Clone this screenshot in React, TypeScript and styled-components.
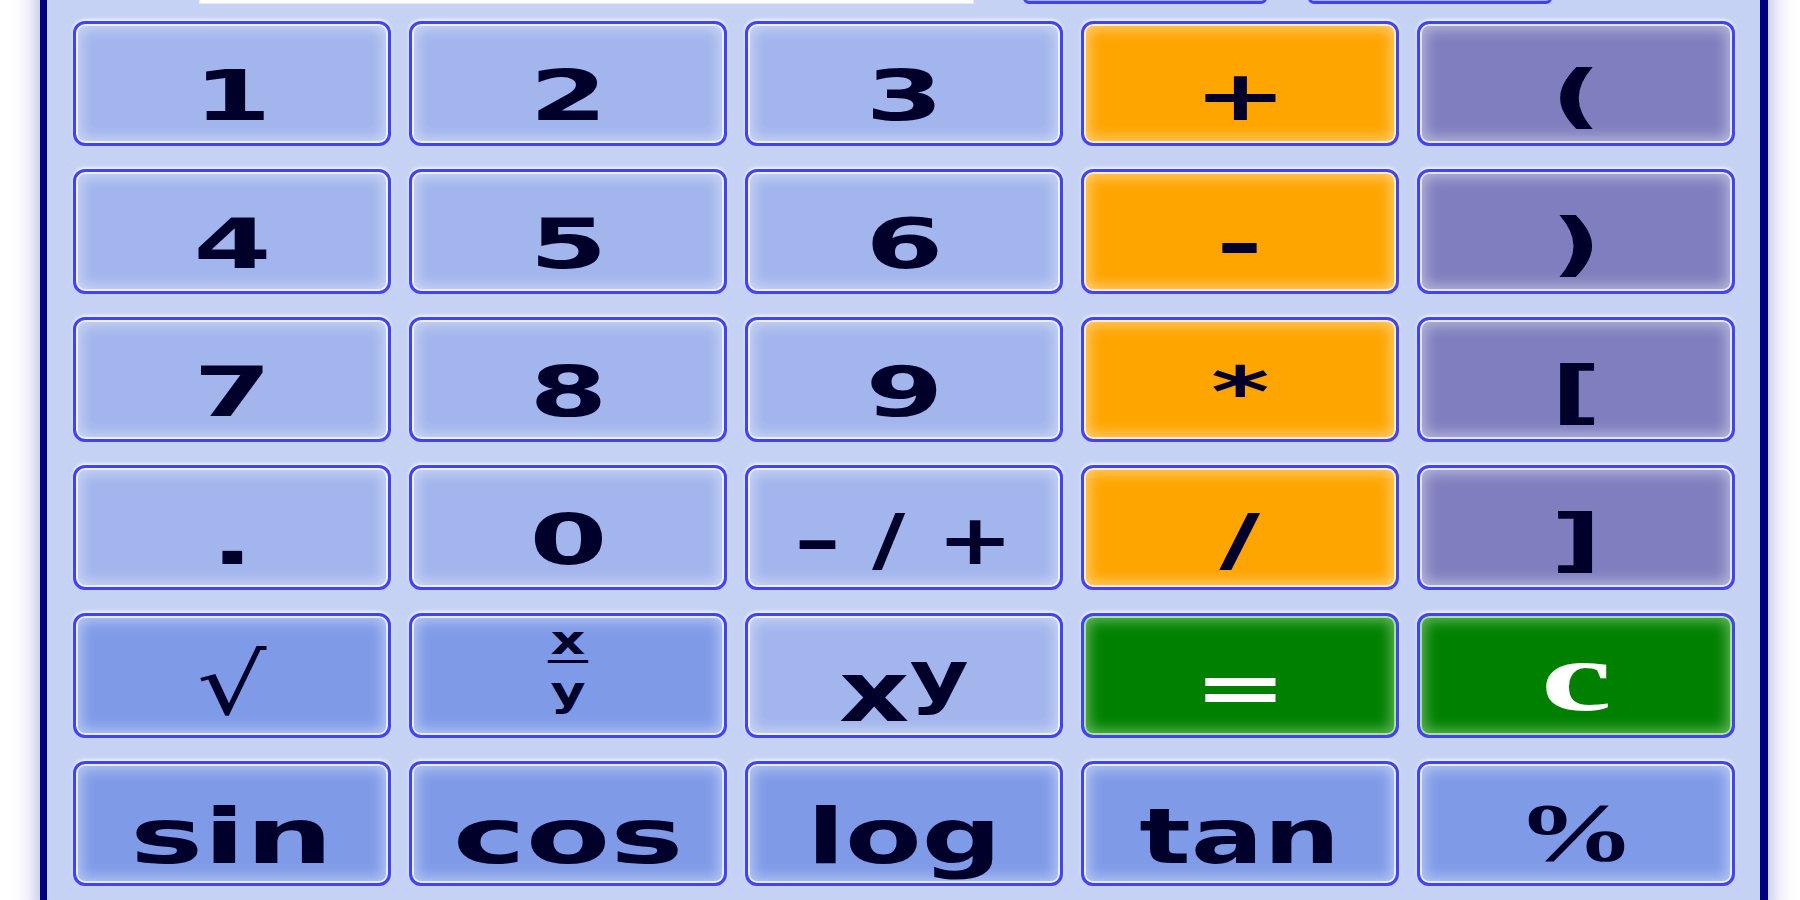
import React from "react";
import styled, { createGlobalStyle, css } from "styled-components";

type Tone = "num" | "fn" | "op" | "paren" | "go";

interface KeyDef {
	label: React.ReactNode;
	tone: Tone;
	size?: number;
	drop?: number;
	serif?: boolean;
	thin?: boolean;
	stretch?: number;
}

const GlobalStyle = createGlobalStyle`
	html, body {
		margin: 0;
		padding: 0;
		background: #ffffff;
		overflow: hidden;
	}
`;

const tones: Record<Tone, string> = {
	num: "#a2b5ec",
	fn: "#7f9be8",
	op: "#ffa500",
	paren: "#7f7fbf",
	go: "#008000",
};

const Page = styled.div`
	width: 1800px;
	height: 900px;
	overflow: hidden;
	box-sizing: border-box;
	padding: 0 32px 0 40px;
	background: #ffffff;
`;

const Panel = styled.div`
	height: 960px;
	margin-top: -40px;
	box-sizing: border-box;
	padding: 0 25px 0 26px;
	background: #c6d2f4;
	border-left: 7px solid #000080;
	border-right: 8px solid #000080;
	box-shadow: 0 0 22px 2px rgba(70, 80, 190, 0.45);
	display: flex;
	flex-direction: column;
	gap: 17px;
`;

const DisplayRow = styled.div`
	display: flex;
	align-items: stretch;
	height: 44px;
	padding-left: 126px;
`;

const Screen = styled.input`
	width: 775px;
	box-sizing: border-box;
	border: 1px solid #e6ebfb;
	background: #ffffff;
	outline: none;
`;

const MemButton = styled.button<{ $first?: boolean }>`
	width: 244px;
	margin-left: ${(p) => (p.$first ? "49px" : "41px")};
	border: 3px solid #4141f2;
	border-radius: 0 0 6px 6px;
	background: #a2b5ec;
`;

const Pad = styled.div`
	display: grid;
	grid-template-columns: repeat(5, 318px);
	grid-auto-rows: 125px;
	column-gap: 18px;
	row-gap: 23px;
`;

const Key = styled.button<{ $tone: Tone }>`
	display: flex;
	align-items: flex-end;
	justify-content: center;
	padding: 0;
	margin: 0;
	box-sizing: border-box;
	cursor: pointer;
	border: 3px solid #4343f6;
	border-radius: 12px;
	background: ${(p) => tones[p.$tone]};
	color: ${(p) => (p.$tone === "go" ? "#ffffff" : "#00002b")};
	box-shadow:
		0 -2px 3px rgba(255, 255, 255, 0.7),
		inset 0 0 0 2px rgba(255, 255, 255, 0.7),
		inset 0 0 14px 5px rgba(255, 255, 255, 0.45);
	${(p) =>
		p.$tone === "go" &&
		css`
			box-shadow:
				0 -2px 3px rgba(255, 255, 255, 0.7),
				inset 0 0 0 2px rgba(190, 230, 170, 0.85),
				inset 0 0 14px 5px rgba(200, 240, 190, 0.5);
		`}
`;

const Label = styled.span<{
	$size: number;
	$drop: number;
	$serif?: boolean;
	$thin?: boolean;
	$stretch: number;
}>`
	display: inline-block;
	font-family: ${(p) =>
		p.$serif ? `"Liberation Serif", "DejaVu Serif", serif` : `"DejaVu Sans", Verdana, sans-serif`};
	font-weight: ${(p) => (p.$thin ? 400 : 700)};
	font-size: ${(p) => p.$size}px;
	line-height: 1;
	white-space: pre;
	margin-bottom: ${(p) => p.$drop}px;
	transform: scaleX(${(p) => p.$stretch});
`;

const Fraction = styled.span`
	display: inline-flex;
	flex-direction: column;
	align-items: center;
	margin-bottom: 28px;
	font-family: "DejaVu Sans", Verdana, sans-serif;
	font-weight: 700;
	font-size: 40px;
	line-height: 0.8;
	transform: scaleX(1.35);
`;

const Bar = styled.span`
	width: 30px;
	height: 3px;
	margin: 4px 0 12px;
	background: #00002b;
`;

const Power = styled.span`
	display: inline-flex;
	align-items: flex-start;
	margin-bottom: 4px;
	font-family: "DejaVu Sans", Verdana, sans-serif;
	font-weight: 700;
	line-height: 0.9;
	transform: scaleX(1.3);
`;

const Base = styled.span`
	font-size: 84px;
`;

const Exp = styled.span`
	font-size: 70px;
	margin-top: -10px;
`;

const keys: KeyDef[] = [
	{ label: "1", tone: "num" },
	{ label: "2", tone: "num" },
	{ label: "3", tone: "num" },
	{ label: "+", tone: "op" },
	{ label: "(", tone: "paren" },

	{ label: "4", tone: "num" },
	{ label: "5", tone: "num" },
	{ label: "6", tone: "num" },
	{ label: "-", tone: "op" },
	{ label: ")", tone: "paren" },

	{ label: "7", tone: "num" },
	{ label: "8", tone: "num" },
	{ label: "9", tone: "num" },
	{ label: "*", tone: "op" },
	{ label: "[", tone: "paren" },

	{ label: ".", tone: "num" },
	{ label: "0", tone: "num" },
	{ label: "– / +", tone: "num", stretch: 1.3 },
	{ label: "/", tone: "op" },
	{ label: "]", tone: "paren" },

	{ label: "√", tone: "fn", thin: true, size: 84, drop: 8, stretch: 1.3 },
	{
		label: (
			<Fraction>
				<span>x</span>
				<Bar />
				<span>y</span>
			</Fraction>
		),
		tone: "fn",
	},
	{
		label: (
			<Power>
				<Base>x</Base>
				<Exp>y</Exp>
			</Power>
		),
		tone: "num",
	},
	{ label: "=", tone: "go" },
	{ label: "c", tone: "go", serif: true, size: 100, drop: 8 },

	{ label: "sin", tone: "fn", size: 77, drop: 8 },
	{ label: "cos", tone: "fn", size: 77, drop: 8 },
	{ label: "log", tone: "fn", size: 77, drop: 8, stretch: 1.45 },
	{ label: "tan", tone: "fn", size: 77, drop: 8, stretch: 1.4 },
	{ label: "%", tone: "fn", serif: true, size: 82, drop: 9, stretch: 1.45 },
];

const Calculator = () => {
	return (
		<Page>
			<Panel>
				<DisplayRow>
					<Screen readOnly value="" />
					<MemButton $first />
					<MemButton />
				</DisplayRow>
				<Pad>
					{keys.map((k, i) => (
						<Key key={i} $tone={k.tone}>
							{typeof k.label === "string" ? (
								<Label
									$size={k.size ?? 70}
									$drop={k.drop ?? 12}
									$serif={k.serif}
									$thin={k.thin}
									$stretch={k.stretch ?? 1.6}
								>
									{k.label}
								</Label>
							) : (
								k.label
							)}
						</Key>
					))}
				</Pad>
			</Panel>
		</Page>
	);
};

export default function App() {
	return (
		<>
			<GlobalStyle />
			<Calculator />
		</>
	);
}
